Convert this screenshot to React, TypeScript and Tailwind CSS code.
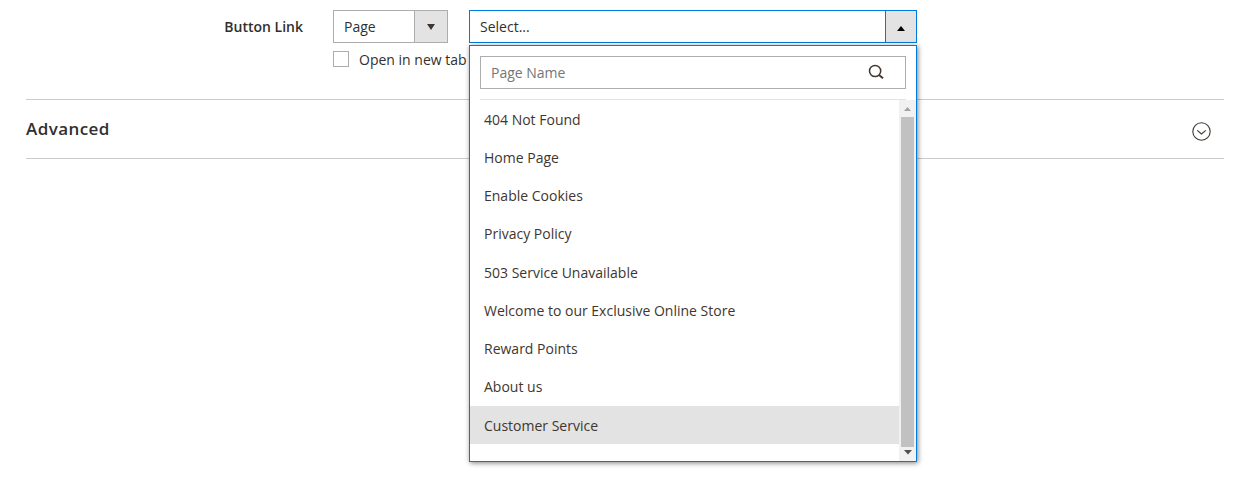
const pages = [
  '404 Not Found',
  'Home Page',
  'Enable Cookies',
  'Privacy Policy',
  '503 Service Unavailable',
  'Welcome to our Exclusive Online Store',
  'Reward Points',
  'About us',
  'Customer Service',
];

function Triangle({ className, up = false }: { className: string; up?: boolean }) {
  return (
    <svg className={className} viewBox="0 0 8 5" fill="currentColor" preserveAspectRatio="none">
      <path d={up ? 'M0 5L4 0L8 5Z' : 'M0 0H8L4 5Z'} />
    </svg>
  );
}

function PageMenu() {
  return (
    <div className="absolute top-[34px] -left-px z-10 flex h-[417px] w-[448px] flex-col border border-[#007bdb] bg-white shadow-[1px_1px_5px_rgba(0,0,0,0.5)]">
      <div className="mx-2.5 mt-2.5 flex h-[33px] shrink-0 items-center border border-[#adadad] pr-[21px] pl-2.5">
        <input
          className="min-w-0 flex-1 bg-transparent leading-[19px] outline-none placeholder:text-[#757575]"
          placeholder="Page Name"
        />
        <svg className="mb-px h-4 w-4" viewBox="0 0 16 16" fill="none" stroke="#41362f">
          <circle cx="7.1" cy="7" r="5.6" strokeWidth="1.5" />
          <path d="M11 11L15 14.3" strokeWidth="1.9" />
        </svg>
      </div>
      <div className="mx-2.5 mt-2.5 h-px shrink-0 bg-[#e3e3e3]" />
      <div className="flex min-h-0 flex-1">
        <ul className="flex-1 text-[#41362f]">
          {pages.map((name) => (
            <li
              key={name}
              className="flex h-[38.25px] items-center pl-3.5 last:h-[38px] last:bg-[#e3e3e3]"
            >
              {name}
            </li>
          ))}
        </ul>
        <div className="flex w-[17px] flex-col items-center bg-[#f1f1f1]">
          <div className="flex h-[17px] items-center">
            <Triangle up className="mt-px h-1 w-[7px] text-[#a3a3a3]" />
          </div>
          <div className="h-[330px] w-[13px] bg-[#c1c1c1]" />
          <Triangle className="mt-[3px] h-[4.5px] w-2 text-[#505050]" />
        </div>
      </div>
    </div>
  );
}

export default function App() {
  return (
    <main className="h-[478px] overflow-hidden bg-white pt-2.5 font-['Open_Sans',sans-serif] text-[14px] leading-[19px] text-[#303030]">
      <div className="flex h-[89px] items-start">
        <label className="mt-[7px] w-[303px] text-right font-semibold">Button Link</label>
        <div className="ml-[30px] w-[136px]">
          <div className="flex h-[33px] w-[115px] border border-[#adadad]">
            <span className="flex flex-1 items-center pl-2.5">Page</span>
            <span className="flex w-[33px] items-center justify-center border-l border-[#adadad] bg-[#e3e3e3]">
              <Triangle className="mt-px h-1.5 w-2 text-[#41362f]" />
            </span>
          </div>
          <div className="mt-[7px] flex items-start whitespace-nowrap">
            <span className="mt-px h-4 w-4 shrink-0 border border-[#adadad] bg-white" />
            <span className="ml-2.5">Open in new tab</span>
          </div>
        </div>
        <div className="relative flex h-[33px] w-[448px] border border-[#007bdb] bg-white">
          <span className="flex flex-1 items-center pl-2.5">Select...</span>
          <span className="flex w-[31px] items-center justify-center border-l border-[#007bdb] bg-[#e3e3e3]">
            <Triangle up className="mt-1 h-[5px] w-2 text-black" />
          </span>
          <PageMenu />
        </div>
      </div>
      <section className="mr-4 ml-[26px] flex h-[60px] items-center justify-between border-y border-[#cccccc] pr-[13px]">
        <h2 className="mb-0.5 text-[17px] font-semibold tracking-[0.425px]">Advanced</h2>
        <svg
          className="mt-[5px] h-[19px] w-[19px]"
          viewBox="0 0 19 19"
          fill="none"
          stroke="#41362f"
          strokeWidth="1.1"
        >
          <circle cx="9.5" cy="9.5" r="8.7" />
          <path d="M5.2 8.4L9.5 12L13.8 8.4" />
        </svg>
      </section>
    </main>
  );
}
